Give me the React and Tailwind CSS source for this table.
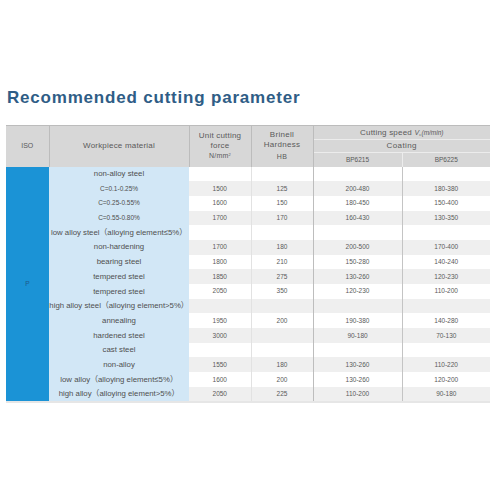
import React from "react";

const rows = [
  ["non-alloy steel", "", "", "", ""],
  ["C=0.1-0.25%", "1500", "125", "200-480", "180-380"],
  ["C=0.25-0.55%", "1600", "150", "180-450", "150-400"],
  ["C=0.55-0.80%", "1700", "170", "160-430", "130-350"],
  ["low alloy steel（alloying element≤5%）", "", "", "", ""],
  ["non-hardening", "1700", "180", "200-500", "170-400"],
  ["bearing steel", "1800", "210", "150-280", "140-240"],
  ["tempered steel", "1850", "275", "130-260", "120-230"],
  ["tempered steel", "2050", "350", "120-230", "110-200"],
  ["high alloy steel（alloying element>5%）", "", "", "", ""],
  ["annealing", "1950", "200", "190-380", "140-280"],
  ["hardened steel", "3000", "", "90-180", "70-130"],
  ["cast steel", "", "", "", ""],
  ["non-alloy", "1550", "180", "130-260", "110-220"],
  ["low alloy（alloying element≤5%）", "1600", "200", "130-260", "120-200"],
  ["high alloy（alloying element>5%）", "2050", "225", "110-200", "90-180"],
];

// small material labels with C= are set like the numbers
const isGrade = (s) => s.startsWith("C=");

export default function App() {
  return (
    <div className="w-[500px] h-[500px] bg-white font-['Liberation_Sans','Noto_Sans_CJK_SC',sans-serif]">
      <div className="pt-[89px] pl-[7px]">
        <h1 className="text-[17px] leading-[17px] font-bold tracking-[0.8px] text-[#2f5d86]">
          Recommended cutting parameter
        </h1>
      </div>

      <table className="mt-[19px] ml-[6px] w-[484px] table-fixed border-collapse text-[#5a5a5a]">
        <colgroup>
          <col className="w-[43px]" />
          <col className="w-[140px]" />
          <col className="w-[62px]" />
          <col className="w-[62px]" />
          <col className="w-[89px]" />
          <col className="w-[88px]" />
        </colgroup>
        <thead className="bg-[#d7d7d7]">
          <tr className="h-[14px]">
            <th rowSpan={3} className="border-t border-r border-[#bcbcbc] text-[7px] font-normal">ISO</th>
            <th rowSpan={3} className="border-t border-r border-[#bcbcbc] text-[8px] font-normal tracking-[0.2px]">
              Workpiece material
            </th>
            <th rowSpan={3} className="border-t border-r border-[#bcbcbc] text-[8px] leading-[10px] font-normal tracking-[0.2px]">
              Unit cutting
              <br />
              force
              <br />
              <span className="text-[7px]">
                N/mm<sup className="text-[4px]">2</sup>
              </span>
            </th>
            <th rowSpan={3} className="border-t border-r border-[#bcbcbc] text-[8px] leading-[10px] font-normal tracking-[0.3px]">
              Brinell
              <br />
              Hardness
              <br />
              <span className="text-[7px] leading-[13px]">HB</span>
            </th>
            <th colSpan={2} className="border-t border-[#bcbcbc] text-[8px] font-normal tracking-[0.2px]">
              Cutting speed <i className="text-[7px]">V</i>
              <sub className="text-[4px]">c</sub>
              <i className="text-[6.5px] tracking-normal">(m/min)</i>
            </th>
          </tr>
          <tr className="h-[13px]">
            <th colSpan={2} className="border-t border-[#ececec] text-[8px] font-normal tracking-[0.4px]">
              Coating
            </th>
          </tr>
          <tr className="h-[14px]">
            <th className="border-t border-r border-[#ececec] text-[6.5px] font-normal">BP6215</th>
            <th className="border-t border-[#ececec] text-[6.5px] font-normal">BP6225</th>
          </tr>
        </thead>
        <tbody className="border-b-2 border-[#e6e6e6]">
          {rows.map((r, i) => {
            const stripe = i % 2 === 1 ? "bg-[#efefef]" : "bg-white";
            return (
              <tr key={i} className="h-[14.7px]">
                {i === 0 && (
                  <td rowSpan={rows.length} className="bg-[#1b93d6] text-center align-middle text-[6.5px] text-[#1d5a8a]">
                    P
                  </td>
                )}
                <td
                  className={
                    "bg-[#d2e7f6] text-center whitespace-nowrap text-[#4f4f4f] " +
                    (isGrade(r[0]) ? "text-[6.5px]" : "text-[7.8px]")
                  }
                >
                  {r[0]}
                </td>
                <td className={stripe + " text-center text-[6.5px] border-r border-[#e2e2e2]"}>{r[1]}</td>
                <td className={stripe + " text-center text-[6.5px] border-r border-[#bdbdbd]"}>{r[2]}</td>
                <td className={stripe + " text-center text-[6.5px] border-r border-[#c4c4c4]"}>{r[3]}</td>
                <td className={stripe + " text-center text-[6.5px]"}>{r[4]}</td>
              </tr>
            );
          })}
        </tbody>
      </table>
    </div>
  );
}
